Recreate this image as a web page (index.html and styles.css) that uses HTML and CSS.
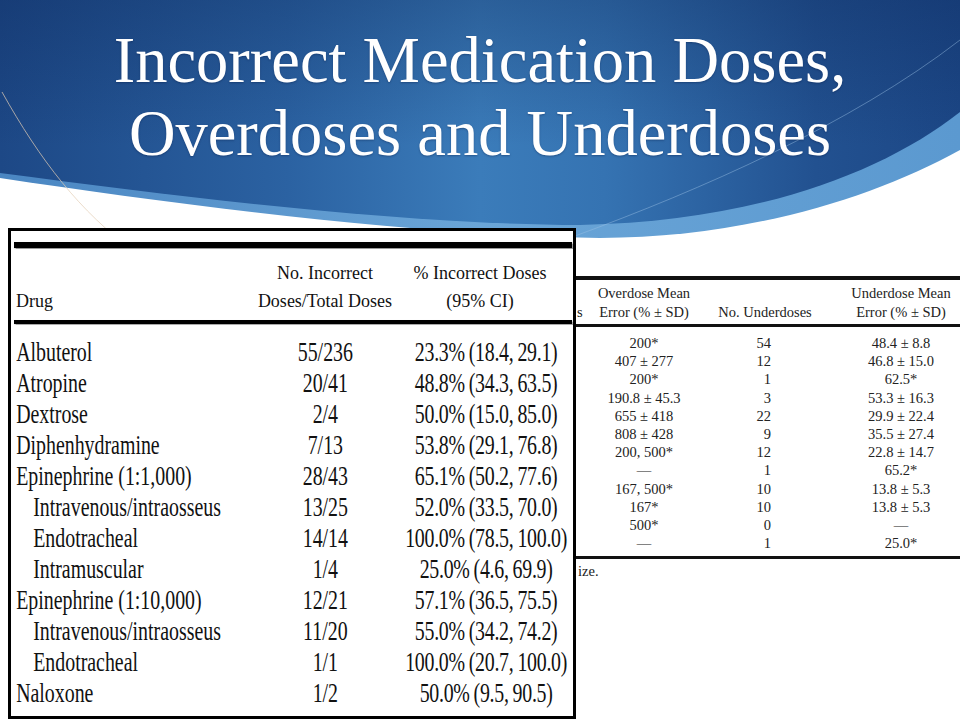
FILE: index.html
```html
<!DOCTYPE html>
<html>
<head>
<meta charset="utf-8">
<link rel="stylesheet" href="styles.css">
</head>
<body>
<div class="slide">
  <svg class="swoosh" width="960" height="260" viewBox="0 0 960 260">
    <defs>
      <linearGradient id="band" x1="0" y1="0" x2="1" y2="0">
        <stop offset="0" stop-color="#4a86c2"/>
        <stop offset="0.5" stop-color="#6aa5d7"/>
        <stop offset="1" stop-color="#5b99d0"/>
      </linearGradient>
      <linearGradient id="main" x1="0" y1="0" x2="1" y2="0">
        <stop offset="0" stop-color="#1d4886"/>
        <stop offset="0.3" stop-color="#2b62a2"/>
        <stop offset="0.5" stop-color="#3b7cba"/>
        <stop offset="0.63" stop-color="#3573b2"/>
        <stop offset="0.85" stop-color="#225190"/>
        <stop offset="1" stop-color="#1c4786"/>
      </linearGradient>
      <linearGradient id="shade" x1="0" y1="0" x2="0" y2="1">
        <stop offset="0" stop-color="#0a2456" stop-opacity="0.32"/>
        <stop offset="0.65" stop-color="#0a2456" stop-opacity="0"/>
      </linearGradient>
    </defs>
    <path d="M0,0 H960 V150 C870,200 740,238 600,238 C420,236 180,205 0,178 Z" fill="url(#band)"/>
    <path d="M0,0 H960 V112 C880,175 750,222 580,225 C400,224 190,198 0,173 Z" fill="url(#main)"/>
    <path d="M0,0 H960 V112 C880,175 750,222 580,225 C400,224 190,198 0,173 Z" fill="url(#shade)"/>
    <path d="M2,92 C40,160 80,212 135,252" fill="none" stroke="#e2cdb5" stroke-width="1" opacity="0.7"/>
    <path d="M575,236 C700,190 850,125 960,40" fill="none" stroke="#9cc0e4" stroke-width="1" opacity="0.45"/>
  </svg>

  <h1 class="title">Incorrect Medication Doses,<br>Overdoses and Underdoses</h1>

  <div class="content">
    <section class="box">
      <div class="rule-thick"></div>
      <div class="thead">
        <div class="th th-drug">Drug</div>
        <div class="th th-c">No. Incorrect<br>Doses/Total Doses</div>
        <div class="th th-c">% Incorrect Doses<br>(95% CI)</div>
      </div>
      <div class="rule-mid"></div>
      <div class="tbody-wrap">
        <div class="tbody">
          <div class="row"><div class="c1">Albuterol</div><div class="c2">55/236</div><div class="c3">23.3% (18.4, 29.1)</div></div>
          <div class="row"><div class="c1">Atropine</div><div class="c2">20/41</div><div class="c3">48.8% (34.3, 63.5)</div></div>
          <div class="row"><div class="c1">Dextrose</div><div class="c2">2/4</div><div class="c3">50.0% (15.0, 85.0)</div></div>
          <div class="row"><div class="c1">Diphenhydramine</div><div class="c2">7/13</div><div class="c3">53.8% (29.1, 76.8)</div></div>
          <div class="row"><div class="c1">Epinephrine (1:1,000)</div><div class="c2">28/43</div><div class="c3">65.1% (50.2, 77.6)</div></div>
          <div class="row"><div class="c1 sub">Intravenous/intraosseus</div><div class="c2">13/25</div><div class="c3">52.0% (33.5, 70.0)</div></div>
          <div class="row"><div class="c1 sub">Endotracheal</div><div class="c2">14/14</div><div class="c3">100.0% (78.5, 100.0)</div></div>
          <div class="row"><div class="c1 sub">Intramuscular</div><div class="c2">1/4</div><div class="c3">25.0% (4.6, 69.9)</div></div>
          <div class="row"><div class="c1">Epinephrine (1:10,000)</div><div class="c2">12/21</div><div class="c3">57.1% (36.5, 75.5)</div></div>
          <div class="row"><div class="c1 sub">Intravenous/intraosseus</div><div class="c2">11/20</div><div class="c3">55.0% (34.2, 74.2)</div></div>
          <div class="row"><div class="c1 sub">Endotracheal</div><div class="c2">1/1</div><div class="c3">100.0% (20.7, 100.0)</div></div>
          <div class="row"><div class="c1">Naloxone</div><div class="c2">1/2</div><div class="c3">50.0% (9.5, 90.5)</div></div>
        </div>
      </div>
    </section>

    <section class="right">
      <div class="r-rule-top"></div>
      <div class="r-head">
        <div class="rh rh-s">s</div>
        <div class="rh rh-c">Overdose Mean<br>Error (% ± SD)</div>
        <div class="rh rh-n">No. Underdoses</div>
        <div class="rh rh-c">Underdose Mean<br>Error (% ± SD)</div>
      </div>
      <div class="r-rule-mid"></div>
      <div class="r-body">
        <div class="r-row"><div></div><div class="rc">200*</div><div class="rn">54</div><div class="rc">48.4 ± 8.8</div></div>
        <div class="r-row"><div></div><div class="rc">407 ± 277</div><div class="rn">12</div><div class="rc">46.8 ± 15.0</div></div>
        <div class="r-row"><div></div><div class="rc">200*</div><div class="rn">1</div><div class="rc">62.5*</div></div>
        <div class="r-row"><div></div><div class="rc">190.8 ± 45.3</div><div class="rn">3</div><div class="rc">53.3 ± 16.3</div></div>
        <div class="r-row"><div></div><div class="rc">655 ± 418</div><div class="rn">22</div><div class="rc">29.9 ± 22.4</div></div>
        <div class="r-row"><div></div><div class="rc">808 ± 428</div><div class="rn">9</div><div class="rc">35.5 ± 27.4</div></div>
        <div class="r-row"><div></div><div class="rc">200, 500*</div><div class="rn">12</div><div class="rc">22.8 ± 14.7</div></div>
        <div class="r-row"><div></div><div class="rc">—</div><div class="rn">1</div><div class="rc">65.2*</div></div>
        <div class="r-row"><div></div><div class="rc">167, 500*</div><div class="rn">10</div><div class="rc">13.8 ± 5.3</div></div>
        <div class="r-row"><div></div><div class="rc">167*</div><div class="rn">10</div><div class="rc">13.8 ± 5.3</div></div>
        <div class="r-row"><div></div><div class="rc">500*</div><div class="rn">0</div><div class="rc">—</div></div>
        <div class="r-row"><div></div><div class="rc">—</div><div class="rn">1</div><div class="rc">25.0*</div></div>
      </div>
      <div class="r-rule-bot"></div>
      <p class="r-note">ize.</p>
    </section>
  </div>
</div>
</body>
</html>
```

FILE: styles.css
```css
html, body {
  margin: 0;
  padding: 0;
  background: #fff;
}

.slide {
  position: relative;
  width: 960px;
  height: 720px;
  overflow: hidden;
  background: #fff;
  font-family: "Liberation Serif", "Times New Roman", serif;
}

.swoosh {
  position: absolute;
  left: 0;
  top: 0;
  z-index: 0;
  display: block;
}

.title {
  position: relative;
  z-index: 1;
  margin: 0;
  padding-top: 24px;
  height: 204px;
  text-align: center;
  color: #fff;
  font-family: "Liberation Serif", "Times New Roman", serif;
  font-weight: normal;
  font-size: 64.5px;
  line-height: 73px;
  text-shadow: 0 1px 2px rgba(0, 20, 60, 0.35);
}

.content {
  position: relative;
  z-index: 1;
  display: flex;
  align-items: flex-start;
  padding-left: 8px;
}

/* ---------- left table ---------- */
.box {
  width: 568px;
  box-sizing: border-box;
  border: 3px solid #000;
  background: #fff;
  padding: 11px 1px 8px 3px;
  color: #111;
}

.rule-thick {
  height: 6px;
  background: #000;
  box-shadow: 0 0 1px 0.5px #999;
}

.thead {
  display: grid;
  grid-template-columns: 240px 142px 168px;
  align-items: end;
  padding: 11px 0 5px;
  font-size: 18px;
  line-height: 28px;
  white-space: nowrap;
}

.th-drug {
  padding-left: 2px;
}

.th-c {
  text-align: center;
}

.rule-mid {
  height: 4px;
  background: #000;
  box-shadow: 0 0 1px 0.5px #aaa;
}

.tbody-wrap {
  padding-top: 12px;
}

.tbody {
  width: 786px;
  margin-right: -228px;
  transform: scaleX(0.71);
  transform-origin: 0 0;
  font-size: 28px;
  line-height: 31px;
  white-space: nowrap;
}

.row {
  display: grid;
  grid-template-columns: 333px 211px 242px;
}

.c1 {
  padding-left: 3px;
}

.c1.sub {
  padding-left: 27px;
}

.c2,
.c3 {
  text-align: center;
}

.c3 {
  letter-spacing: -0.4px;
  word-spacing: -1px;
}

/* ---------- right (partially hidden) table ---------- */
.right {
  flex: 1;
  margin-top: 48px;
  overflow: hidden;
  color: #222;
  font-size: 14.5px;
  white-space: nowrap;
}

.r-rule-top {
  height: 4px;
  background: #111;
}

.r-head {
  display: grid;
  grid-template-columns: 12px 112px 142px 118px;
  align-items: end;
  padding: 4px 0 2px;
  line-height: 19px;
}

.rh-s {
  padding-left: 1px;
}

.rh-c {
  text-align: center;
}

.rh-n {
  text-align: center;
  padding-right: 12px;
}

.r-rule-mid {
  height: 3px;
  background: #111;
}

.r-body {
  padding: 7px 0 4px;
}

.r-row {
  display: grid;
  grid-template-columns: 12px 112px 142px 118px;
  line-height: 18.2px;
}

.rc {
  text-align: center;
}

.rn {
  text-align: right;
  padding-right: 71px;
}

.r-rule-bot {
  height: 3px;
  background: #111;
}

.r-note {
  margin: 3px 0 0;
  padding-left: 2px;
  line-height: 19px;
}
```
